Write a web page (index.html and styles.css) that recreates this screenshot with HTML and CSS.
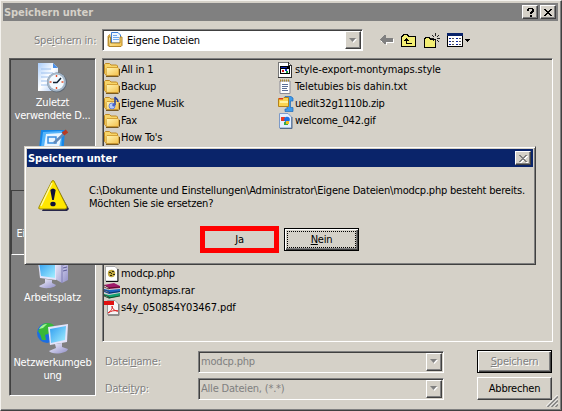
FILE: index.html
```html
<!DOCTYPE html>
<html lang="de">
<head>
  <meta charset="UTF-8" />
  <title>Speichern unter</title>
  <link rel="stylesheet" href="styles.css">
</head>
<body>

  <!-- shared icons -->
  <svg class="defs" width="0" height="0">
    <defs>
      <linearGradient id="gFolder" x1="0" y1="0" x2="1" y2="1">
        <stop offset="0" stop-color="#fff7b8"/>
        <stop offset="1" stop-color="#f4c04a"/>
      </linearGradient>
      <linearGradient id="gScreen" x1="0" y1="0" x2="1" y2="1">
        <stop offset="0" stop-color="#2f9cf0"/>
        <stop offset="1" stop-color="#a4f0ff"/>
      </linearGradient>
      <linearGradient id="gPaper" x1="0" y1="0" x2="1" y2="1">
        <stop offset="0" stop-color="#a9cdfb"/>
        <stop offset="0.5" stop-color="#ffffff"/>
        <stop offset="1" stop-color="#9cc2f5"/>
      </linearGradient>
      <linearGradient id="gCase" x1="0" y1="0" x2="1" y2="1">
        <stop offset="0" stop-color="#f4f4ff"/>
        <stop offset="1" stop-color="#9290c8"/>
      </linearGradient>
    </defs>
    <symbol id="folder" viewBox="0 0 16 16">
      <path d="M.5 2.500 L1.500 1.500 H5.500 L7 3 H12.500 L13.500 4 V12.500 H1.500 L.5 11.500Z" fill="#f7d568" stroke="#c08a24"/>
      <path d="M3 5.500 H14 L14.800 6.300 V12.500 L13.800 13.500 H2.200 V6.500Z" fill="url(#gFolder)" stroke="#d09a2c" stroke-width=".9"/>
      <path d="M2 14.400 H14.400 L15.500 13.200 V7" fill="none" stroke="#6b4a10"/>
    </symbol>
    <symbol id="drop" viewBox="0 0 8 5">
      <path d="M1 1 H8 L4.500 5Z" fill="#fff"/>
      <path d="M0 0 H7 L3.500 4Z" fill="#808080"/>
    </symbol>
    <symbol id="cross" viewBox="0 0 8 7">
      <path d="M0 0h2v1h1v1h2v-1h1v-1h2v1h-1v1h-1v1h-1v1h1v1h1v1h1v1h-2v-1h-1v-1h-2v1h-1v1h-2v-1h1v-1h1v-1h1v-1h-1v-1h-1v-1h-1z"/>
    </symbol>
  </svg>

  <div class="window">
    <div class="titlebar inactive">
      <h1>Speichern unter</h1>
      <button class="caption-btn">
        <svg width="7" height="9" viewBox="0 0 7 9" shape-rendering="crispEdges"><path d="M1 0h5v1h1v3h-1v1h-1v1h-2v-2h1v-1h1v-2h-3v2h-2v-2h1zM3 7h2v2h-2z"/></svg>
      </button>
      <button class="caption-btn">
        <svg width="8" height="7" shape-rendering="crispEdges"><use href="#cross"/></svg>
      </button>
    </div>

    <div class="lookin">
      <label class="disabled">Spe<u>i</u>chern in:</label>
      <div class="combo white">
        <svg width="16" height="16" viewBox="0 0 16 16">
          <path d="M1 4 L3 2.500 V13 L1 14Z" fill="#f7d568" stroke="#b8862a" stroke-width=".8"/>
          <path d="M4.500 .5 H11 L13.500 3 V11 H4.500Z" fill="#eef6ff" stroke="#3f7fd6"/>
          <path d="M6 3.500 H10 M6 5.500 H12 M6 7.500 H12" stroke="#6fa8ee"/>
          <path d="M1.500 5 H3.500 V11 H13 V5 H15 V13.500 L14 14.500 H2Z" fill="url(#gFolder)" stroke="#a97a1c" stroke-width=".9"/>
        </svg>
        <span>Eigene Dateien</span>
        <div class="combo-btn"><svg width="8" height="5"><use href="#drop"/></svg></div>
      </div>
      <div class="toolbar">
        <svg width="14" height="10" viewBox="0 0 14 10" shape-rendering="crispEdges">
          <path d="M1 6h13v2h-7v2h-1v-1h-1v-1h-2v-1h-2zM13 4h1v4h-1z" fill="#fff"/>
          <path d="M0 4h1v-1h1v-1h1v-1h1v-1h2v3h7v4h-7v2h-2v-1h-1v-1h-1v-1h-1v-1h-1z" fill="#808080"/>
        </svg>
        <svg width="15" height="13" viewBox="0 0 15 13" shape-rendering="crispEdges">
          <path d="M.5 12.500V2.500h1v-1h1v-1h4v1h1v1h7v10z" fill="#f3ee74" stroke="#000"/>
          <path d="M5 4h1v1h1v1h1v1h-2v2h5v1h-6v-3h-2v-1h1v-1h1z" fill="#000"/>
        </svg>
        <svg width="16" height="15" viewBox="0 0 16 15" shape-rendering="crispEdges">
          <path d="M.5 14.500V5.500h1v-1h4v1h1v1h5v8z" fill="#f3ee74" stroke="#000"/>
          <path d="M11 0h1v3h-1zM11 7h1v3h-1zM7 5h3v1h-3zM13 5h3v1h-3zM8 2h1v1h1v1h-1v-1h-1zM14 2h1v1h-1v1h-1v-1h1zM9 7h1v1h-1zM13 7h1v1h1v1h-1v-1h-1z" fill="#222"/>
        </svg>
        <svg width="23" height="14" viewBox="0 0 23 14" shape-rendering="crispEdges">
          <path d="M.5 .5h15v13h-15z" fill="#fff" stroke="#000"/>
          <path d="M0 0h16v3h-16z" fill="#0a246a"/>
          <path d="M2 5h2v1h-2zM2 8h2v1h-2zM2 11h2v1h-2zM9 5h2v1h-2zM9 8h2v1h-2zM9 11h2v1h-2z" fill="#0a249a"/>
          <path d="M5 5h2v1h-2zM5 8h2v1h-2zM5 11h2v1h-2zM12 5h2v1h-2zM12 8h2v1h-2zM12 11h2v1h-2z" fill="#555"/>
          <path d="M18 6h5v1h-1v1h-1v1h-1v-1h-1v-1h-1z"/>
        </svg>
      </div>
    </div>

    <div class="main">
      <div class="places">
        <div class="place">
          <svg width="32" height="32" viewBox="0 0 32 32">
            <path d="M1 1 H16 L21 6 V29 H1Z" fill="url(#gPaper)"/>
            <path d="M16 1 V6 H21Z" fill="#4a8fe8"/>
            <path d="M4 7h10M4 11h12M4 15h8M4 19h6M4 23h6" stroke="#9cc0ee"/>
            <circle cx="20" cy="20.500" r="10" fill="#5f6873"/>
            <circle cx="19.500" cy="20" r="9.500" fill="#a4b6c8"/>
            <circle cx="19.500" cy="20" r="7.500" fill="#f3faff"/>
            <path d="M19.500 13v2M19.500 25v2M12.500 20h2M24.500 20h2" stroke="#e8502a" stroke-width="1.400"/>
            <path d="M16 20.500 H20 L24 16" fill="none" stroke="#123" stroke-width="1.500"/>
          </svg>
          <span>Zuletzt<br>verwendete D...</span>
        </div>
        <div class="place">
          <svg width="32" height="32" viewBox="0 0 32 32">
            <path d="M4 2 H28 L26 30 H1Z" fill="#1687e8"/>
            <path d="M6 4 L25 3 L24 28 L3 27Z" fill="#55b4fa"/>
            <path d="M9 6 L25 5 L22 20 L7 19Z" fill="#e9f5ff"/>
            <path d="M11 9h8v6h-8z" fill="none" stroke="#3a8de0" stroke-width="1.500"/>
            <path d="M17 15 L29 4" stroke="#6289b8" stroke-width="2.500"/>
            <path d="M26 6 L30 3" stroke="#b93a22" stroke-width="4"/>
          </svg>
        </div>
        <div class="place active">
          <svg width="32" height="32" viewBox="0 0 16 16"><use href="#folder"/></svg>
          <span>Eigene Dateien</span>
        </div>
        <div class="place">
          <svg width="32" height="32" viewBox="0 0 32 32">
            <path d="M18 3 L28 1 L31 3 V23 L25 26 L18 22Z" fill="url(#gCase)"/>
            <path d="M25 5 V26" stroke="#7f7db2"/>
            <path d="M26 8l4-1M26 11l4-1M26 14l4-1" stroke="#5d5b98"/>
            <path d="M1 4 L19 6 V23 L3 21Z" fill="#e4e4fa"/>
            <path d="M2 5 L18 7 V21 L4 19Z" fill="url(#gScreen)"/>
            <path d="M8 22 L15 23 V26 L19 28 C17 32 4 32 2 29 L8 26Z" fill="url(#gCase)"/>
          </svg>
          <span>Arbeitsplatz</span>
        </div>
        <div class="place">
          <svg width="32" height="32" viewBox="0 0 32 32">
            <circle cx="10" cy="11" r="10" fill="#1d6ee0"/>
            <path d="M6 2 C10 0 16 1 17 4 L12 7 L13 11 L8 13 L9 18 L5 18 L3 12 L1 9Z" fill="#38b838"/>
            <path d="M2 7 C4 3 8 2 10 2 L6 6Z" fill="#a4f49a"/>
            <path d="M11 5 L31 2 L30 20 L13 23Z" fill="#e4e4fa"/>
            <path d="M13 7 L29 4 L28 18 L14 21Z" fill="url(#gScreen)"/>
            <path d="M18 22 L25 21 V25 L31 27 C30 32 14 33 12 29 L19 26Z" fill="url(#gCase)"/>
          </svg>
          <span>Netzwerkumgeb<br>ung</span>
        </div>
      </div>

      <div class="content">
        <div class="files">
          <ul>
            <li><svg><use href="#folder"/></svg>All in 1</li>
            <li><svg><use href="#folder"/></svg>Backup</li>
            <li>
              <svg viewBox="0 0 16 16">
                <use href="#folder" width="16" height="16"/>
                <circle cx="8" cy="10" r="3" fill="#b8cdf8" stroke="#6d86d8"/>
                <path d="M11 9 V1 C12 3 14 3 14 6" fill="none" stroke="#273f9c" stroke-width="1.500"/>
                <circle cx="9.800" cy="9" r="1.600" fill="#4563cc"/>
              </svg>Eigene Musik
            </li>
            <li><svg><use href="#folder"/></svg>Fax</li>
            <li><svg><use href="#folder"/></svg>How To's</li>
            <li class="lower">
              <svg viewBox="0 0 16 16">
                <path d="M1.500 .5 H11 L13.500 3 V15 H1.500Z" fill="#fff" stroke="#aaa"/>
                <path d="M14 3 V15.500 H2" fill="none" stroke="#111"/>
                <circle cx="7.500" cy="7.500" r="3.700" fill="#c0a840"/>
                <path d="M5 6h2v1h-2zM8 5h2v1h-2zM9 8h2v1h-2zM6 9h2v1h-2zM7 7h1v1h-1z" fill="#332b10"/>
              </svg>modcp.php
            </li>
            <li>
              <svg viewBox="0 0 16 16">
                <path d="M0 2 L10 0 L16 3 V5 L5 6 L0 4Z" fill="#a01a6a"/>
                <path d="M0 2 L5 5 V6 L0 4Z M5 5 L16 4" fill="#fff" stroke="#300" stroke-width=".6"/>
                <path d="M0 6 L5 7 L16 6 V9 L5 11 L0 9Z" fill="#1a62c0"/>
                <path d="M0 7 L5 9 V10 L0 8Z M5 10 L16 8.500" fill="#fff" stroke="#013" stroke-width=".6"/>
                <path d="M0 11 L5 12 L16 10 V13 L5 15.500 L0 13Z" fill="#12a070"/>
                <path d="M0 12 L5 14 V15 L0 13Z M5 15 L16 13" fill="#fff" stroke="#020" stroke-width=".7"/>
              </svg>montymaps.rar
            </li>
            <li class="wide">
              <svg viewBox="0 0 16 16">
                <path d="M3.500 .5 H11 L14.500 4 V14.500 H3.500Z" fill="#f6f6f6" stroke="#999"/>
                <path d="M15 4 V15.300 H4" fill="none" stroke="#666" stroke-width=".8"/>
                <path d="M0 1h10v4h-10z" fill="#e01010"/>
                <path d="M4 13 C7 11 9 8 8 6 C8 9 11 11 14 11 C10 10 7 11 4 13Z" fill="none" stroke="#dc2020"/>
              </svg>s4y_050854Y03467.pdf
            </li>
          </ul>
          <ul>
            <li class="wide">
              <svg viewBox="0 0 16 16" shape-rendering="crispEdges">
                <path d="M.5 .5h10l3 3v12h-13z" fill="#fff" stroke="#777"/>
                <path d="M10 0h1v3h3v13h-14v-1h13v-11h-3z" fill="#333"/>
                <path d="M2 4h10v8h-10z" fill="#000"/>
                <path d="M3 7h8v4h-8z" fill="#fff"/>
                <path d="M3 5h6v1h-6z" fill="#0a24b0"/>
                <path d="M4 8h2v2h-2z" fill="#d02020"/><path d="M7 7h2v2h-2z" fill="#1030d0"/><path d="M8 9h2v2h-2z" fill="#10a040"/>
              </svg>style-export-montymaps.style
            </li>
            <li class="wide">
              <svg viewBox="0 0 16 16">
                <path d="M2 2 H12 V14.500 H2Z" fill="#fff" stroke="#8a8a96"/>
                <path d="M2 1.500h10" stroke="#b08a28" stroke-width="2" stroke-dasharray="1 1"/>
                <path d="M4 5.500h6M4 7.500h6M4 9.500h5M4 11.500h6" stroke="#5b6e96"/>
              </svg>Teletubies bis dahin.txt
            </li>
            <li>
              <svg viewBox="0 0 16 16">
                <path d="M7 .5 H13 L15 2 V5 H12.500 V11.500 H15 V15.500 H7 V13 H9 V3 H7Z" fill="#3f9bea" stroke="#1f68b8" stroke-width=".7"/>
                <path d="M.5 2.500 H5 L6 1.500 H10.500 V10.500 H.5Z" fill="#fbd550" stroke="#b58218"/>
                <path d="M1 2h4v1.500h-4z" fill="#e03818"/>
                <path d="M2 5h8v2h-8z" fill="#fff2a0"/>
              </svg>uedit32g1110b.zip
            </li>
            <li>
              <svg viewBox="0 0 16 16">
                <path d="M1.500 .5 H10 L13.500 4 V15 H1.500Z" fill="#e4f0ff" stroke="#7c9ac8"/>
                <path d="M14 4 V15.500 H2" fill="none" stroke="#556a88"/>
                <path d="M3 4h4v4h-4z" fill="#e83a24"/>
                <circle cx="9" cy="6.500" r="2.800" fill="#1c70e4"/>
                <path d="M6 9h4v3h-4z" fill="#38a848"/>
                <path d="M8 8h3v3h-3z" fill="#f4c020"/>
              </svg>welcome_042.gif
            </li>
          </ul>
        </div>

        <div class="fields">
          <label class="disabled">Datei<u>n</u>ame:</label>
          <div class="combo">
            <span>modcp.php</span>
            <div class="combo-btn"><svg width="8" height="5"><use href="#drop"/></svg></div>
          </div>
          <button class="btn default disabled"><u>S</u>peichern</button>

          <label class="disabled">Datei<u>t</u>yp:</label>
          <div class="combo">
            <span>Alle Dateien, (*.*)</span>
            <div class="combo-btn"><svg width="8" height="5"><use href="#drop"/></svg></div>
          </div>
          <button class="btn">Abbrechen</button>
        </div>
      </div>
    </div>

    <svg class="grip" width="12" height="12" viewBox="0 0 12 12">
      <path d="M0 11.500 L11.500 0 M4 11.500 L11.500 4 M8 11.500 L11.500 8" stroke="#fff"/>
      <path d="M1.500 12 L12 1.500 M5.500 12 L12 5.500 M9.500 12 L12 9.500" stroke="#808080" stroke-width="1.500"/>
    </svg>

    <!-- confirm dialog -->
    <div class="dialog">
      <div class="titlebar">
        <h1>Speichern unter</h1>
        <button class="caption-btn off">
          <svg width="8" height="7" shape-rendering="crispEdges"><use href="#cross"/></svg>
        </button>
      </div>
      <div class="message">
        <svg width="32" height="32" viewBox="0 0 32 32">
          <path d="M16 2 L31 29 L29 31 H4Z" fill="#26264a"/>
          <path d="M14 1 Q15 0 16 1 L29 27 Q29 29 27 29 H2 Q0 29 1 27Z" fill="#ffe600" stroke="#9c8a00"/>
          <path d="M14 3 L3 26" stroke="#fff9a0" stroke-width="1.500"/>
          <path d="M12.300 10 Q15 7 17.700 10 L15.800 20 H14.200Z" fill="#10103a"/>
          <ellipse cx="15" cy="24" rx="2.700" ry="2.300" fill="#10103a"/>
        </svg>
        <p>C:\Dokumente und Einstellungen\Administrator\Eigene Dateien\modcp.php besteht bereits.<br>Möchten Sie sie ersetzen?</p>
      </div>
      <div class="actions">
        <button class="marked"><u>J</u>a</button>
        <button class="btn default focus"><span><u>N</u>ein</span></button>
      </div>
    </div>
  </div>

</body>
</html>
```
FILE: styles.css
```css
* {
  margin: 0;
  padding: 0;
  box-sizing: border-box;
}

body {
  width: 562px;
  height: 411px;
  overflow: hidden;
  background-color: #d5d1c8;
  font-family: "DejaVu Sans Condensed", "DejaVu Sans", sans-serif;
  font-stretch: condensed;
  font-size: 11px;
  line-height: 13px;
  letter-spacing: -0.2px;
  color: #000;
  white-space: nowrap;
}

svg {
  display: block;
  flex: none;
}

.defs {
  position: absolute;
}

button {
  font: inherit;
  letter-spacing: inherit;
  color: inherit;
}

u {
  text-underline-offset: 1px;
  text-decoration-thickness: 1px;
}

.window {
  position: relative;
  width: 562px;
  height: 411px;
  padding: 2px;
  border: 1px solid;
  border-color: #f4f2ee #404040 #404040 #f4f2ee;
  box-shadow: inset -1px -1px 0 #808080;
}

.titlebar {
  display: flex;
  align-items: center;
  height: 18px;
  padding: 0 2px 0 1px;
  background-color: #0a246a;
  color: #fff;
}

.titlebar h1 {
  flex: 1;
  font-size: 11px;
  letter-spacing: -0.05px;
}

.window > .titlebar {
  width: 555px;
}

.titlebar.inactive {
  background-color: #808080;
  color: #d5d1c8;
}

.caption-btn {
  display: flex;
  align-items: center;
  justify-content: center;
  width: 16px;
  height: 14px;
  margin-left: 2px;
  background-color: #d5d1c8;
  border: 1px solid;
  border-color: #fff #404040 #404040 #fff;
  box-shadow: inset -1px -1px 0 #808080;
}

.caption-btn.off {
  fill: #808080;
}

.caption-btn.off svg {
  filter: drop-shadow(1px 1px 0 #fff);
}

.disabled {
  color: #808080;
  text-shadow: 1px 1px 0 #fff;
}

.lookin {
  display: flex;
  align-items: center;
  height: 22px;
  margin-top: 8px;
}

.lookin label {
  width: 99px;
  padding-left: 31px;
}

.combo {
  display: flex;
  align-items: center;
  height: 22px;
  padding-left: 2px;
  color: #808080;
  border: 1px solid;
  border-color: #808080 #fff #fff #808080;
  box-shadow: inset 1px 1px 0 #404040;
}

.combo span {
  flex: 1;
}

.combo.white {
  width: 261px;
  padding-left: 4px;
  background-color: #fff;
  color: #000;
}

.combo.white span {
  padding-left: 4px;
}

.combo-btn {
  display: flex;
  align-items: center;
  justify-content: center;
  width: 16px;
  height: 18px;
  margin-right: 1px;
  background-color: #d5d1c8;
  border: 1px solid;
  border-color: #fff #404040 #404040 #fff;
  box-shadow: inset -1px -1px 0 #808080;
}

.toolbar {
  display: flex;
  align-items: center;
  gap: 7px;
  margin-left: 17px;
}

.toolbar svg:nth-child(2) {
  margin-right: 1px;
}

.main {
  display: flex;
  margin: 7px 0 0 6px;
}

.places {
  width: 87px;
  height: 338px;
  background-color: #808080;
  color: #fff;
  border: 1px solid;
  border-color: #606060 #fff #fff #606060;
  box-shadow: inset 1px 1px 0 #404040;
  text-align: center;
}

.place {
  display: flex;
  flex-direction: column;
  align-items: center;
  height: 65px;
  padding-top: 2px;
}

.place:first-child {
  height: 67px;
  padding-top: 3px;
}

.place.active {
  margin: -1px 0 0 1px;
  border: 1px solid;
  border-color: #404040 #fff #fff #404040;
}

.place span {
  margin-top: 2px;
}

.content {
  margin-left: 6px;
}

.files {
  display: flex;
  width: 451px;
  height: 284px;
  padding: 2px 0 0 1px;
  border: 1px solid;
  border-color: #808080 #fff #fff #808080;
  box-shadow: inset 1px 1px 0 #404040;
}

.files ul {
  width: 174px;
  list-style: none;
}

.files li {
  display: flex;
  align-items: center;
  gap: 1px;
  height: 17px;
}

.files li.lower {
  margin-top: 119px;
}

.files li.wide {
  letter-spacing: -0.1px;
}

.files li svg {
  width: 16px;
  height: 16px;
}

.fields {
  display: grid;
  grid-template-columns: 93px 246px 75px;
  row-gap: 4px;
  margin: 8px 0 0 3px;
  align-items: center;
}

.fields .btn {
  margin-left: 33px;
}

.btn {
  width: 75px;
  height: 23px;
  background-color: #d5d1c8;
  border: 1px solid;
  border-color: #fff #404040 #404040 #fff;
  box-shadow: inset -1px -1px 0 #808080;
}

.btn.default {
  border-color: #000;
  box-shadow: inset 1px 1px 0 #fff, inset -1px -1px 0 #404040, inset -2px -2px 0 #808080;
}

.grip {
  position: absolute;
  right: 3px;
  bottom: 3px;
}

.dialog {
  position: absolute;
  left: 23px;
  top: 145px;
  width: 512px;
  height: 119px;
  padding: 2px;
  background-color: #d5d1c8;
  border: 1px solid;
  border-color: #d5d1c8 #404040 #404040 #d5d1c8;
  box-shadow: inset 1px 1px 0 #fff, inset -1px -1px 0 #808080;
}

.message {
  display: flex;
  gap: 19px;
  padding: 13px 0 0 11px;
}

.message p {
  padding-top: 4px;
}

.actions {
  display: flex;
  align-items: center;
  gap: 5px;
  margin: 14px 0 0 173px;
}

.marked {
  width: 79px;
  height: 27px;
  background: none;
  border: 5px solid #f00;
}

.btn.focus {
  padding: 2px;
}

.btn.focus span {
  display: block;
  height: 17px;
  line-height: 15px;
  border: 1px dotted #000;
}
```
